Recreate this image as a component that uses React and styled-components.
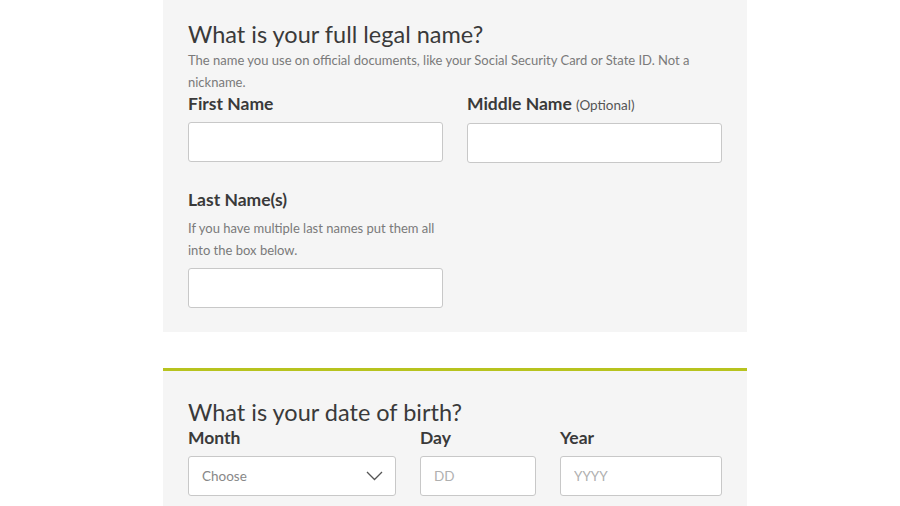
import styled, { createGlobalStyle } from "styled-components";

const GlobalStyle = createGlobalStyle`
  html, body {
    margin: 0;
    padding: 0;
    background: #ffffff;
    font-family: Lato, "Open Sans", sans-serif;
    color: #333333;
  }
  * { box-sizing: border-box; }
`;

const Page = styled.div`
  width: 594px;
  margin: 0 auto;
  padding-left: 10px;
`;

const Panel = styled.section`
  background: #f5f5f5;
  padding: ${(p) => p.$pad};
  border-top: ${(p) => (p.$accent ? "3px solid #b7c31e" : "none")};
  margin-top: ${(p) => p.$gap || "0"};
`;

const Heading = styled.h2`
  margin: 0;
  font-size: 23.5px;
  font-weight: 400;
  line-height: 30px;
  color: #3a3a3a;
`;

const Help = styled.p`
  margin: 0;
  font-size: 13px;
  line-height: 22px;
  color: #7a7a7a;
  max-width: ${(p) => p.$max || "none"};
`;

const Grid = styled.div`
  display: grid;
  grid-template-columns: ${(p) => p.$cols};
  column-gap: 24px;
  margin-top: ${(p) => p.$top || "0"};
`;

const Field = styled.div`
  display: flex;
  flex-direction: column;
`;

const Label = styled.label`
  font-size: 17.5px;
  font-weight: 700;
  line-height: 22px;
  color: #3a3a3a;
  margin-bottom: ${(p) => p.$mb || "7px"};
`;

const Optional = styled.span`
  font-size: 13.5px;
  font-weight: 400;
  color: #555555;
`;

const Input = styled.input`
  height: 40px;
  width: 100%;
  border: 1px solid #c8c8c8;
  border-radius: 3px;
  background: #ffffff;
  padding: 0 13px;
  margin-top: ${(p) => p.$top || "0"};
  font-family: inherit;
  font-size: 13.5px;
  color: #333;
  &::placeholder { color: #b0b0b0; }
`;

const SelectBox = styled.div`
  height: 40px;
  border: 1px solid #c8c8c8;
  border-radius: 3px;
  background: #ffffff;
  padding: 0 12px 0 13px;
  display: flex;
  align-items: center;
  justify-content: space-between;
  font-size: 13.5px;
  color: #888888;
`;

const Chevron = () => (
  <svg width="17" height="10" viewBox="0 0 17 10" fill="none">
    <path d="M1 1l7.5 7.5L16 1" stroke="#555" strokeWidth="1.3" />
  </svg>
);

export default function App() {
  return (
    <Page>
      <GlobalStyle />
      <Panel $pad="19px 25px 24px">
        <Heading>What is your full legal name?</Heading>
        <Help>
          The name you use on official documents, like your Social Security Card or State ID. Not a
          nickname.
        </Help>
        <Grid $cols="1fr 1fr">
          <Field>
            <Label>First Name</Label>
            <Input />
          </Field>
          <Field>
            <Label>
              Middle Name <Optional>(Optional)</Optional>
            </Label>
            <Input />
          </Field>
        </Grid>
        <Grid $cols="1fr 1fr" $top="26px">
          <Field>
            <Label $mb="6px">Last Name(s)</Label>
            <Help $max="255px">If you have multiple last names put them all into the box below.</Help>
            <Input $top="7px" />
          </Field>
        </Grid>
      </Panel>
      <Panel $accent $gap="36px" $pad="26px 25px 20px">
        <Heading>What is your date of birth?</Heading>
        <Grid $cols="208px 116px 1fr">
          <Field>
            <Label>Month</Label>
            <SelectBox>
              Choose
              <Chevron />
            </SelectBox>
          </Field>
          <Field>
            <Label>Day</Label>
            <Input placeholder="DD" />
          </Field>
          <Field>
            <Label>Year</Label>
            <Input placeholder="YYYY" />
          </Field>
        </Grid>
      </Panel>
    </Page>
  );
}
